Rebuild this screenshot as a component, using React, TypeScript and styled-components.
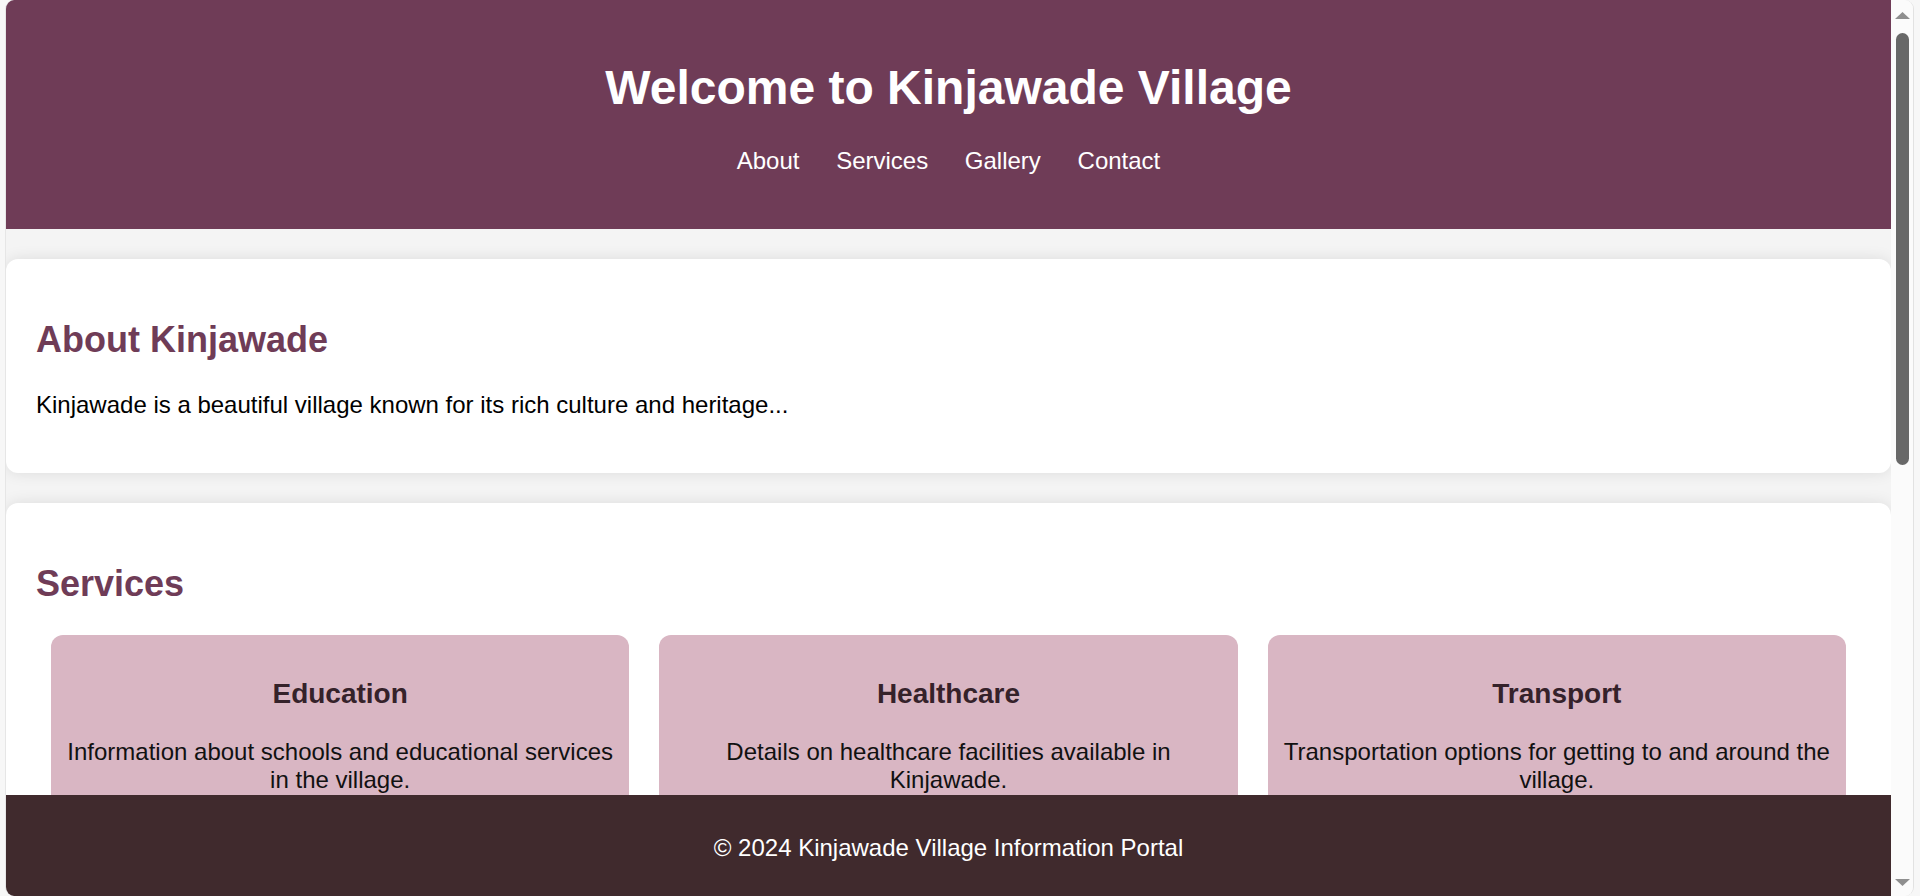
import React from "react";
import styled, { createGlobalStyle } from "styled-components";

const GlobalStyle = createGlobalStyle`
  html, body {
    margin: 0;
    padding: 0;
    height: 100%;
    overflow: hidden;
  }
  body {
    background: #f7f7f7;
    font-family: "Liberation Sans", Arial, sans-serif;
    color: #000;
  }
  #root {
    height: 100%;
  }
  * {
    box-sizing: border-box;
  }
`;

const Viewport = styled.div`
  display: flex;
  height: 100vh;
  padding: 0 6px 0 5px;
  background: #f7f7f7;
`;

const Window = styled.div`
  flex: 1;
  min-width: 0;
  display: flex;
  border-left: 1px solid #e6e6e6;
  border-right: 1px solid #e2e2e2;
  border-radius: 9px;
  overflow: hidden;
`;

const Page = styled.div`
  flex: 1;
  min-width: 0;
  display: flex;
  flex-direction: column;
  background: #f4f4f4;
`;

const Header = styled.header`
  flex: none;
  background: #6f3c57;
  color: #fff;
  text-align: center;
  padding: 60px 30px 54px;
`;

const Title = styled.h1`
  margin: 0 0 32px;
  font-size: 48px;
  font-weight: 700;
  line-height: 55px;
`;

const Nav = styled.nav`
  display: flex;
  justify-content: center;
  gap: 36.7px;
`;

const NavLink = styled.a`
  color: #fff;
  text-decoration: none;
  font-size: 24px;
  line-height: 28px;
`;

const Main = styled.main`
  flex: 1;
  min-height: 0;
  overflow: hidden;
  display: flex;
  flex-direction: column;
  gap: 30px;
  padding-top: 30px;
`;

const Section = styled.section`
  flex: none;
  background: #fff;
  border-radius: 12px;
  padding: 30px;
  box-shadow: 0 0 15px rgba(0, 0, 0, 0.1);
`;

const SectionTitle = styled.h2`
  margin: 30px 0;
  font-size: 36px;
  font-weight: 700;
  line-height: 42px;
  color: #6f3c57;
`;

const Text = styled.p`
  margin: 24px 0;
  font-size: 24px;
  line-height: 28px;
`;

const ServiceGrid = styled.div`
  display: flex;
  gap: 30px;
  padding: 0 15px;
`;

const ServiceCard = styled.div`
  flex: 1;
  min-width: 0;
  background: #d9b6c3;
  border-radius: 12px;
  padding: 15px;
  text-align: center;
`;

const CardTitle = styled.h3`
  margin: 28px 0;
  font-size: 28px;
  font-weight: 700;
  line-height: 32px;
  color: #35222a;
`;

const CardText = styled.p`
  margin: 24px 0;
  font-size: 24px;
  line-height: 27.6px;
  color: #111;
`;

const Footer = styled.footer`
  flex: none;
  height: 101px;
  background: #402a2d;
  color: #fff;
  text-align: center;
  padding: 39px 20px 34px;
  font-size: 24px;
  line-height: 28px;
`;

const ScrollTrack = styled.div`
  flex: none;
  width: 22px;
  background: #fbfbfb;
  display: flex;
  flex-direction: column;
  align-items: center;
  padding: 12px 0 10px;
`;

const Thumb = styled.div`
  margin-top: 14px;
  width: 13px;
  height: 432px;
  background: #686868;
  border-radius: 7px;
`;

const Spacer = styled.div`
  flex: 1;
`;

const Arrow = ({ down }: { down?: boolean }) => (
  <svg width="15" height="7" viewBox="0 0 15 7" style={{ display: "block" }}>
    <polygon
      points={down ? "0,0 15,0 7.5,7" : "7.5,0 15,7 0,7"}
      fill="#8f8f8f"
    />
  </svg>
);

const services = [
  {
    title: "Education",
    text: "Information about schools and educational services in the village.",
  },
  {
    title: "Healthcare",
    text: "Details on healthcare facilities available in Kinjawade.",
  },
  {
    title: "Transport",
    text: "Transportation options for getting to and around the village.",
  },
];

export default function App() {
  return (
    <>
      <GlobalStyle />
      <Viewport>
        <Window>
          <Page>
            <Header>
              <Title>Welcome to Kinjawade Village</Title>
              <Nav>
                <NavLink href="#about">About</NavLink>
                <NavLink href="#services">Services</NavLink>
                <NavLink href="#gallery">Gallery</NavLink>
                <NavLink href="#contact">Contact</NavLink>
              </Nav>
            </Header>
            <Main>
              <Section id="about">
                <SectionTitle>About Kinjawade</SectionTitle>
                <Text>
                  Kinjawade is a beautiful village known for its rich culture and
                  heritage...
                </Text>
              </Section>
              <Section id="services">
                <SectionTitle>Services</SectionTitle>
                <ServiceGrid>
                  {services.map((s) => (
                    <ServiceCard key={s.title}>
                      <CardTitle>{s.title}</CardTitle>
                      <CardText>{s.text}</CardText>
                    </ServiceCard>
                  ))}
                </ServiceGrid>
              </Section>
              <Section id="gallery">
                <SectionTitle>Gallery</SectionTitle>
                <Text>Photos of Kinjawade village.</Text>
              </Section>
              <Section id="contact">
                <SectionTitle>Contact</SectionTitle>
                <Text>Get in touch with the village office.</Text>
              </Section>
            </Main>
            <Footer>© 2024 Kinjawade Village Information Portal</Footer>
          </Page>
          <ScrollTrack>
            <Arrow />
            <Thumb />
            <Spacer />
            <Arrow down />
          </ScrollTrack>
        </Window>
      </Viewport>
    </>
  );
}
